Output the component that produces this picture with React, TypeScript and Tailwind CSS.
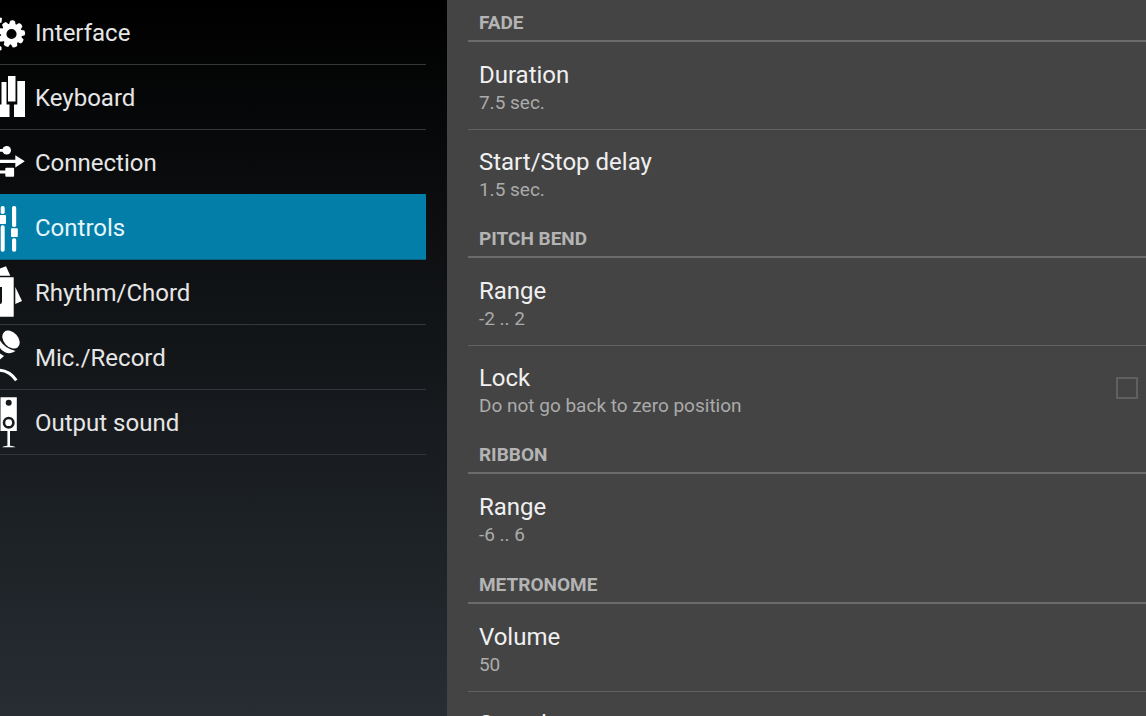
import type { ReactNode } from "react";

type NavItem = { label: string; icon: ReactNode };
type Setting = { title: string; summary: string; checkbox?: boolean };
type Section = { heading: string; settings: Setting[] };

const gearTeeth = [-85, -45, -5, 35, 75, 115, 155, 195, 235];

const navItems: NavItem[] = [
    {
        label: "Interface",
        icon: (
            <>
                {gearTeeth.map((angle) => (
                    <path
                        key={angle}
                        d="M20.5 30.6 L24.6 31.6 Q25.8 34 24.6 36.4 L20.5 37.4 Z"
                        transform={`rotate(${angle} 11.5 34)`}
                    />
                ))}
                <circle cx="11.5" cy="34" r="7.8" fill="none" stroke="currentColor" strokeWidth="5.4" />
                <path d="M0 17.5 L2 18 L1.5 22.5 L0 23 Z M0 46 L1.5 47 L1.5 50 L0 50.5 Z" />
            </>
        ),
    },
    {
        label: "Keyboard",
        icon: (
            <>
                <path d="M1.5 17 H6.5 V39.5 H9.5 V52 H0 V39.5 H1.5 Z" />
                <path d="M8 11 H15.5 V36.5 H8 Z" />
                <path d="M17.3 16 H25 V52 H14 V39.5 H17.3 Z" />
            </>
        ),
    },
    {
        label: "Connection",
        icon: (
            <>
                <path d="M0 19 H5 V21.8 H0 Z M0 29.8 H16 V33 H0 Z M0 40.5 H6 V43.5 H0 Z" />
                <circle cx="6.7" cy="20.3" r="4.3" />
                <path d="M15.3 25.3 L24.8 31.3 L15.3 37.4 Z" />
                <rect x="5.3" y="37.7" width="8.8" height="9" rx="1" />
            </>
        ),
    },
    {
        label: "Controls",
        icon: (
            <>
                <rect x="0.7" y="11" width="4" height="8" rx="1.8" />
                <rect x="-2" y="20" width="8" height="9" rx="1" />
                <rect x="0.7" y="30.3" width="4" height="26.4" rx="1.8" />
                <rect x="12" y="11" width="4.2" height="21" rx="1.8" />
                <rect x="11" y="33.3" width="6.8" height="8.7" rx="1" />
                <rect x="12" y="43.3" width="4.2" height="13.4" rx="1.8" />
            </>
        ),
    },
    {
        label: "Rhythm/Chord",
        icon: (
            <>
                <path d="M0 8.5 L6 6.3 L10.3 15.8 H0 Z M15.3 27 L22 41 L15.3 44 Z" />
                <path d="M0 17.3 H13.7 V56.7 H0 V44 Q2 44 2 41.5 V27 H0 Z" />
            </>
        ),
    },
    {
        label: "Mic./Record",
        icon: (
            <>
                <ellipse cx="11" cy="14.6" rx="10.2" ry="7.2" transform="rotate(48 11 14.6)" />
                <path d="M0 15.5 Q5 23.5 15.5 26 Q11 29.5 5 27.3 Q1.5 25.7 0 23 Z" />
                <path d="M0 28.5 L4 31 L0 34.5 Z" />
                <path
                    d="M-2 45.2 Q9 45 16.3 55.3"
                    fill="none"
                    stroke="currentColor"
                    strokeWidth="3"
                />
            </>
        ),
    },
    {
        label: "Output sound",
        icon: (
            <>
                <path
                    fillRule="evenodd"
                    d="M0.5 7.3 H16.8 V41 H0.5 Z M5.7 12.7 a3 3 0 1 0 6 0 a3 3 0 1 0 -6 0 Z M2.7 32.7 a6 6 0 1 0 12 0 a6 6 0 1 0 -12 0 Z"
                />
                <circle cx="8.7" cy="32.7" r="3.4" />
                <path d="M7.4 41 H10 V55.8 Q14 56 15.5 57.2 H2 Q3.5 56 7.4 55.8 Z" />
            </>
        ),
    },
];

const sections: Section[] = [
    {
        heading: "FADE",
        settings: [
            { title: "Duration", summary: "7.5 sec." },
            { title: "Start/Stop delay", summary: "1.5 sec." },
        ],
    },
    {
        heading: "PITCH BEND",
        settings: [
            { title: "Range", summary: "-2 .. 2" },
            { title: "Lock", summary: "Do not go back to zero position", checkbox: true },
        ],
    },
    {
        heading: "RIBBON",
        settings: [{ title: "Range", summary: "-6 .. 6" }],
    },
    {
        heading: "METRONOME",
        settings: [
            { title: "Volume", summary: "50" },
            { title: "Sound", summary: "Click" },
        ],
    },
];

function Sidebar({ selected }: { selected: string }) {
    return (
        <nav className="w-[39%] shrink-0 bg-linear-to-b/srgb from-black to-[#272d33] pr-[21px]">
            <ul>
                {navItems.map(({ label, icon }) => (
                    <li key={label}>
                        <button
                            type="button"
                            aria-current={label === selected ? "page" : undefined}
                            className={
                                label === selected
                                    ? "-mt-px flex h-[66px] w-full items-center border-b border-[#0a5f80] bg-[#027ea8] pt-px text-left text-2xl text-[#e6f6fb]"
                                    : "flex h-[65px] w-full items-center border-b border-[#33373a] text-left text-2xl text-[#e6e6e6]"
                            }
                        >
                            <svg
                                viewBox="0 0 35 64"
                                fill="currentColor"
                                className="h-16 w-[35px] shrink-0 text-white"
                                aria-hidden="true"
                            >
                                {icon}
                            </svg>
                            <span className="pt-0.5">{label}</span>
                        </button>
                    </li>
                ))}
            </ul>
        </nav>
    );
}

function SettingText({ title, summary }: Setting) {
    return (
        <span className="block pt-1">
            <span className="block text-2xl leading-8 text-[#f0f0f0]">{title}</span>
            <span className="block text-[19px] leading-6 text-[#ababab]">{summary}</span>
        </span>
    );
}

function SettingRow(setting: Setting) {
    if (setting.checkbox) {
        return (
            <label className="flex h-full w-full items-center justify-between pl-[11px] pr-2">
                <SettingText {...setting} />
                <input
                    type="checkbox"
                    className="size-[22px] appearance-none border-2 border-[#606060] checked:bg-[#027ea8]"
                />
            </label>
        );
    }
    return (
        <button type="button" className="h-full w-full pl-[11px] text-left">
            <SettingText {...setting} />
        </button>
    );
}

export default function App() {
    return (
        <div className="flex h-screen overflow-hidden bg-[#444444] font-[Roboto,sans-serif]">
            <Sidebar selected="Controls" />
            <main className="min-w-0 flex-1 overflow-hidden pl-[21px]">
                {sections.map(({ heading, settings }) => (
                    <section key={heading} className="group">
                        <h2 className="flex h-11 items-center border-b-2 border-[#6b6b6b] pl-[11px] pt-2 text-[19px] font-bold text-[#b4b4b4] group-first:h-[42px] group-first:pt-1.5">
                            {heading}
                        </h2>
                        <ul>
                            {settings.map((setting) => (
                                <li
                                    key={setting.title}
                                    className="h-[86px] not-first:mt-px not-first:h-[85px] not-first:border-t not-first:border-[#606060]"
                                >
                                    <SettingRow {...setting} />
                                </li>
                            ))}
                        </ul>
                    </section>
                ))}
            </main>
        </div>
    );
}
